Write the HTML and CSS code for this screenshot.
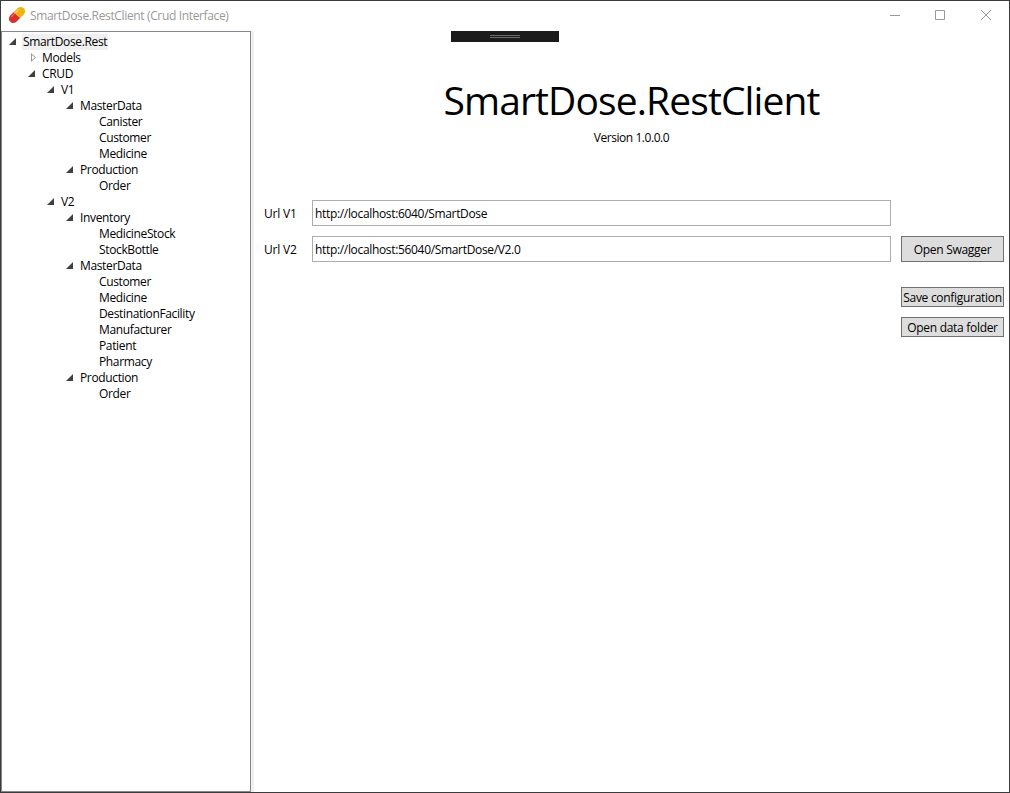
FILE: index.html
```html
<!DOCTYPE html>
<html lang="en">
<head>
<meta charset="utf-8">
<title>SmartDose.RestClient (Crud Interface)</title>
<link rel="stylesheet" href="styles.css">
</head>
<body>
<div class="window">
  <header class="titlebar">
    <svg class="app-icon" width="18" height="18" viewBox="0 0 18 18">
      <g transform="rotate(-45 9 9)">
        <path d="M9 4.6H3.8a4.4 4.4 0 0 0 0 8.8H9z" fill="#d9302c"/>
        <path d="M9 4.6h5.2a4.400 4.400 0 0 1 0 8.800H9z" fill="#edb60f"/>
        <path d="M4 6.300h4.200" stroke="#ee6c5e" stroke-width="1.2" stroke-linecap="round"/>
        <path d="M9.800 6.300H14" stroke="#f8d25a" stroke-width="1.2" stroke-linecap="round"/>
      </g>
    </svg>
    <span class="title">SmartDose.RestClient (Crud Interface)</span>
    <svg class="controls" width="102" height="10" viewBox="0 0 102 10" fill="none" stroke="#999">
      <path d="M0 5.500h10"/>
      <path d="M45.500 .5h9v9h-9z"/>
      <path d="M91 0l10 10M101 0L91 10"/>
    </svg>
  </header>
  <div class="body">
    <nav class="tree">
      <div class="row l0 open"><i></i><span class="selected">SmartDose.Rest</span></div>
      <div class="row l1 closed"><i></i><span>Models</span></div>
      <div class="row l1 open"><i></i><span>CRUD</span></div>
      <div class="row l2 open"><i></i><span>V1</span></div>
      <div class="row l3 open"><i></i><span>MasterData</span></div>
      <div class="row l4"><i></i><span>Canister</span></div>
      <div class="row l4"><i></i><span>Customer</span></div>
      <div class="row l4"><i></i><span>Medicine</span></div>
      <div class="row l3 open"><i></i><span>Production</span></div>
      <div class="row l4"><i></i><span>Order</span></div>
      <div class="row l2 open"><i></i><span>V2</span></div>
      <div class="row l3 open"><i></i><span>Inventory</span></div>
      <div class="row l4"><i></i><span>MedicineStock</span></div>
      <div class="row l4"><i></i><span>StockBottle</span></div>
      <div class="row l3 open"><i></i><span>MasterData</span></div>
      <div class="row l4"><i></i><span>Customer</span></div>
      <div class="row l4"><i></i><span>Medicine</span></div>
      <div class="row l4"><i></i><span>DestinationFacility</span></div>
      <div class="row l4"><i></i><span>Manufacturer</span></div>
      <div class="row l4"><i></i><span>Patient</span></div>
      <div class="row l4"><i></i><span>Pharmacy</span></div>
      <div class="row l3 open"><i></i><span>Production</span></div>
      <div class="row l4"><i></i><span>Order</span></div>
    </nav>
    <div class="splitter"></div>
    <main class="content">
      <div class="debug-bar"><span></span></div>
      <h1>SmartDose.RestClient</h1>
      <p class="version">Version 1.0.0.0</p>
      <div class="form">
        <label for="v1">Url V1</label>
        <input id="v1" value="http://localhost:6040/SmartDose">
        <span></span>
        <label for="v2">Url V2</label>
        <input id="v2" value="http://localhost:56040/SmartDose/V2.0">
        <button class="swagger">Open Swagger</button>
      </div>
      <div class="actions">
        <button>Save configuration</button>
        <button>Open data folder</button>
      </div>
    </main>
  </div>
</div>
</body>
</html>
```
FILE: styles.css
```css
* { box-sizing: border-box; }
body {
  margin: 0;
  font-family: "Open Sans", "Noto Sans", sans-serif;
  font-size: 12px;
  line-height: 16px;
  letter-spacing: -0.2px;
  color: #000;
}
.window {
  width: 1010px;
  height: 793px;
  display: flex;
  flex-direction: column;
  border: 1px solid #3b3b3e;
  background: #fff;
}
.titlebar {
  height: 30px;
  flex: none;
  display: flex;
  align-items: center;
  padding: 0 17px 2px 7px;
}
.title { margin-left: 4px; padding-top: 2px; color: #999; letter-spacing: -0.35px; }
.controls { margin-left: auto; }
.body { flex: 1; min-height: 0; display: flex; }
.tree {
  width: 250px;
  flex: none;
  border: 1px solid #828790;
  padding: 2px 0 0 7px;
  letter-spacing: -0.36px;
}
.row { display: flex; height: 16px; white-space: nowrap; }
.row i { width: 13px; flex: none; }
.row span { padding: 0 1px; }
.l1 { padding-left: 19px; }
.l2 { padding-left: 38px; }
.l3 { padding-left: 57px; }
.l4 { padding-left: 76px; }
.open i::before {
  content: "";
  display: block;
  width: 7px;
  height: 7px;
  margin-top: 4px;
  background: #404040;
  clip-path: polygon(100% 0, 100% 100%, 0 100%);
}
.closed i::before {
  content: "";
  display: block;
  width: 5px;
  height: 9px;
  margin: 3px 0 0 3px;
  background: #999;
  clip-path: polygon(evenodd, 0 0, 100% 50%, 0 100%, 0 0, 20% 23%, 20% 77%, 76% 50%, 20% 23%);
}
.row .selected { background: #f0f0f0; }
.splitter { width: 3px; flex: none; background: #f0f0f0; }
.content { flex: 1; min-width: 0; display: flex; flex-direction: column; }
.debug-bar {
  width: 108px;
  height: 11px;
  margin-left: 197px;
  background: #1b1b1b;
  display: flex;
  justify-content: center;
  align-items: center;
}
.debug-bar span {
  width: 30px;
  height: 3px;
  border: solid #6a6a6a;
  border-width: 1px 0;
}
h1 {
  margin: 31px 0 0;
  font-size: 39px;
  font-weight: 400;
  line-height: 54px;
  letter-spacing: -0.9px;
  text-align: center;
}
.version { margin: 3px 0 0; text-align: center; letter-spacing: -0.45px; }
.form {
  margin: 54px 5px 0 10px;
  display: grid;
  grid-template-columns: 48px 579px 103px;
  grid-template-rows: 26px 26px;
  row-gap: 10px;
  align-items: center;
}
label { padding-top: 2px; }
input {
  width: 579px;
  height: 26px;
  margin: 0;
  padding: 0 2px;
  border: 1px solid #abadb3;
  background: #fff;
  font: inherit;
  letter-spacing: -0.33px;
  color: #000;
}
button {
  width: 103px;
  height: 20px;
  padding: 2px 0 0;
  border: 1px solid #707070;
  background: #ddd;
  font: inherit;
  letter-spacing: -0.3px;
  line-height: 16px;
  white-space: nowrap;
  color: #000;
}
.swagger { height: 26px; margin-left: 10px; }
.actions {
  margin: 25px 5px 0 0;
  display: flex;
  flex-direction: column;
  align-items: flex-end;
  gap: 10px;
}
```
